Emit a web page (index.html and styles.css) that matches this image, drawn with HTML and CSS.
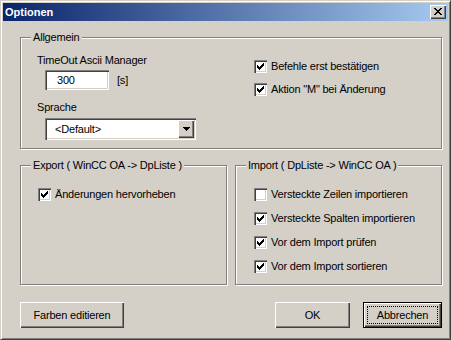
FILE: index.html
```html
<!DOCTYPE html>
<html>
<head>
<meta charset="utf-8">
<link rel="stylesheet" href="styles.css">
</head>
<body>
<div class="window">
  <div class="titlebar">
    <span class="title">Optionen</span>
    <span class="close"><svg width="8" height="7" viewBox="0 0 8 7" shape-rendering="crispEdges"><path fill="#000" d="M0 0h2v1H0zM6 0h2v1H6zM1 1h2v1H1zM5 1h2v1H5zM2 2h4v1H2zM3 3h2v1H3zM2 4h4v1H2zM1 5h2v1H1zM5 5h2v1H5zM0 6h2v1H0zM6 6h2v1H6z"/></svg></span>
  </div>
  <div class="client">
    <div class="group general">
      <span class="legend">Allgemein</span>
      <div class="left-col">
        <div class="label">TimeOut Ascii Manager</div>
        <div class="edit-row">
          <div class="edit">300</div>
          <span class="unit">[s]</span>
        </div>
        <div class="label lang">Sprache</div>
        <div class="combo">
          <span class="combo-text">&lt;Default&gt;</span>
          <span class="drop"><svg width="7" height="4" viewBox="0 0 7 4" shape-rendering="crispEdges"><path fill="#000" d="M0 0h7v1H0zM1 1h5v1H1zM2 2h3v1H2zM3 3h1v1H3z"/></svg></span>
        </div>
      </div>
      <div class="right-col">
        <div class="check-row"><span class="checkbox checked"></span><span>Befehle erst bestätigen</span></div>
        <div class="check-row"><span class="checkbox checked"></span><span>Aktion "M" bei Änderung</span></div>
      </div>
    </div>
    <div class="groups-row">
      <div class="group export">
        <span class="legend">Export ( WinCC OA -&gt; DpListe )</span>
        <div class="check-row"><span class="checkbox checked"></span><span>Änderungen hervorheben</span></div>
      </div>
      <div class="group import">
        <span class="legend">Import ( DpListe -&gt; WinCC OA )</span>
        <div class="check-row"><span class="checkbox"></span><span>Versteckte Zeilen importieren</span></div>
        <div class="check-row"><span class="checkbox checked"></span><span>Versteckte Spalten importieren</span></div>
        <div class="check-row"><span class="checkbox checked"></span><span>Vor dem Import prüfen</span></div>
        <div class="check-row"><span class="checkbox checked"></span><span>Vor dem Import sortieren</span></div>
      </div>
    </div>
    <div class="buttons">
      <span class="btn farben">Farben editieren</span>
      <span class="spacer"></span>
      <span class="btn ok">OK</span>
      <span class="btn cancel">Abbrechen</span>
    </div>
  </div>
</div>
</body>
</html>
```
FILE: styles.css
```css
* { box-sizing: border-box; margin: 0; padding: 0; }
body {
  margin: 0;
  background: #D4D0C8;
  font: 11px/13px "Liberation Sans", Arial, sans-serif;
  letter-spacing: -0.2px;
  color: #000;
}
.window {
  width: 451px;
  height: 340px;
  background: #D4D0C8;
  border: 1px solid;
  border-color: #D4D0C8 #404040 #404040 #D4D0C8;
  box-shadow: inset 1px 1px 0 #fff, inset -1px -1px 0 #808080;
  padding: 2px;
}
.titlebar {
  height: 18px;
  display: flex;
  align-items: center;
  justify-content: space-between;
  padding: 0 2px;
  background: linear-gradient(to right, #0A246A, #A6CAF0);
  color: #fff;
  font-weight: bold;
  letter-spacing: 0;
}
.close {
  width: 16px;
  height: 14px;
  background: #D4D0C8;
  box-shadow: inset 1px 1px 0 #fff, inset -1px -1px 0 #404040, inset -2px -2px 0 #808080;
  display: flex;
  align-items: center;
  justify-content: center;
  padding: 0 1px 1px 0;
}
.close svg { display: block; }
.client { padding: 16px 6px 0 17px; }
.group {
  position: relative;
  border: 1px solid #808080;
  box-shadow: 1px 1px 0 #fff, inset 1px 1px 0 #fff;
}
.legend {
  position: absolute;
  top: -7px;
  left: 10px;
  padding: 0 2px;
  background: #D4D0C8;
  white-space: nowrap;
}
.general {
  width: 422px;
  height: 112px;
  display: flex;
  padding: 16px 0 0 16px;
}
.left-col { width: 217px; }
.edit-row { display: flex; align-items: center; margin-top: 3px; }
.edit {
  margin-left: 8px;
  width: 64px;
  height: 20px;
  line-height: 20px;
  background: #fff;
  padding-left: 12px;
  box-shadow: inset 1px 1px 0 #808080, inset 2px 2px 0 #404040, inset -1px -1px 0 #fff, inset -2px -2px 0 #D4D0C8;
}
.unit { margin-left: 8px; }
.lang { margin-top: 11px; }
.combo {
  margin: 4px 0 0 8px;
  width: 151px;
  height: 22px;
  display: flex;
  padding: 2px;
  background: #fff;
  box-shadow: inset 1px 1px 0 #808080, inset 2px 2px 0 #404040, inset -1px -1px 0 #fff, inset -2px -2px 0 #D4D0C8;
}
.combo-text { flex: 1; padding-left: 8px; line-height: 18px; }
.drop {
  width: 16px;
  height: 18px;
  background: #D4D0C8;
  box-shadow: inset 1px 1px 0 #fff, inset -1px -1px 0 #404040, inset -2px -2px 0 #808080;
  display: flex;
  align-items: center;
  justify-content: center;
}
.drop svg { display: block; }
.right-col { padding-top: 6px; }
.check-row {
  display: flex;
  align-items: center;
  height: 13px;
  gap: 4px;
  white-space: nowrap;
}
.right-col .check-row + .check-row { margin-top: 10px; }
.checkbox {
  flex: none;
  width: 13px;
  height: 13px;
  background: #fff;
  box-shadow: inset 1px 1px 0 #808080, inset 2px 2px 0 #404040, inset -1px -1px 0 #fff, inset -2px -2px 0 #D4D0C8;
}
.checkbox.checked {
  background: #fff url("data:image/svg+xml,%3Csvg xmlns='http://www.w3.org/2000/svg' width='13' height='13' shape-rendering='crispEdges'%3E%3Cpath d='M3 5h1v3H3zM4 6h1v3H4zM5 7h1v3H5zM6 6h1v3H6zM7 5h1v3H7zM8 4h1v3H8zM9 3h1v3H9z'/%3E%3C/svg%3E") no-repeat;
}
.groups-row { display: flex; gap: 8px; margin-top: 16px; }
.export, .import { width: 207px; height: 120px; padding-top: 22px; }
.export { padding-left: 17px; }
.import { padding-left: 18px; }
.import .check-row + .check-row { margin-top: 11px; }
.buttons { display: flex; margin-top: 17px; }
.spacer { flex: 1; }
.btn {
  position: relative;
  height: 26px;
  display: flex;
  align-items: center;
  justify-content: center;
  background: #D4D0C8;
  box-shadow: inset 1px 1px 0 #fff, inset -1px -1px 0 #404040, inset -2px -2px 0 #808080;
}
.farben { width: 104px; }
.ok { width: 75px; margin-right: 13px; }
.cancel {
  width: 79px;
  border: 1px solid #000;
}
.cancel::after {
  content: "";
  position: absolute;
  inset: 3px;
  border: 1px dotted #000;
}
```
